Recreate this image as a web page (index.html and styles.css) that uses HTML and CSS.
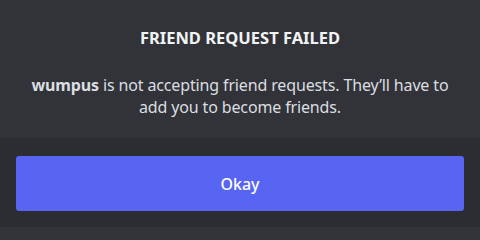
FILE: index.html
```html
<!DOCTYPE html>
<html lang="en">
<head>
<meta charset="utf-8">
<link rel="stylesheet" href="styles.css">
</head>
<body>
<div class="modal">
  <div class="content">
    <h1 class="title">FRIEND REQUEST FAILED</h1>
    <p class="body"><strong>wumpus</strong> is not accepting friend requests. They’ll have to add you to become friends.</p>
  </div>
  <div class="footer">
    <button class="okay">Okay</button>
  </div>
</div>
</body>
</html>
```

FILE: styles.css
```css
html, body {
  margin: 0;
  padding: 0;
  background: #313338;
}
.modal {
  width: 480px;
  height: 227px;
  overflow: hidden;
  display: flex;
  flex-direction: column;
  font-family: "Noto Sans", "Liberation Sans", sans-serif;
}
.content {
  height: 138px;
  flex: none;
  box-sizing: border-box;
  padding: 28px 16px 0;
  background: #313338;
  text-align: center;
}
.title {
  margin: 0;
  font-size: 16.5px;
  line-height: 20px;
  font-weight: 700;
  color: #f2f3f5;
}
.body {
  margin: 26px 0 0;
  font-size: 16px;
  line-height: 22px;
  letter-spacing: -0.14px;
  color: #dbdee1;
}
.body strong {
  font-weight: 700;
}
.footer {
  flex: 1;
  background: #2b2d31;
  padding: 18px 16px 16px;
  display: flex;
  flex-direction: column;
}
.okay {
  flex: 1;
  border: 0;
  border-radius: 3px;
  background: #5865f2;
  color: #ffffff;
  font-family: inherit;
  font-size: 16px;
  font-weight: 500;
}
```
